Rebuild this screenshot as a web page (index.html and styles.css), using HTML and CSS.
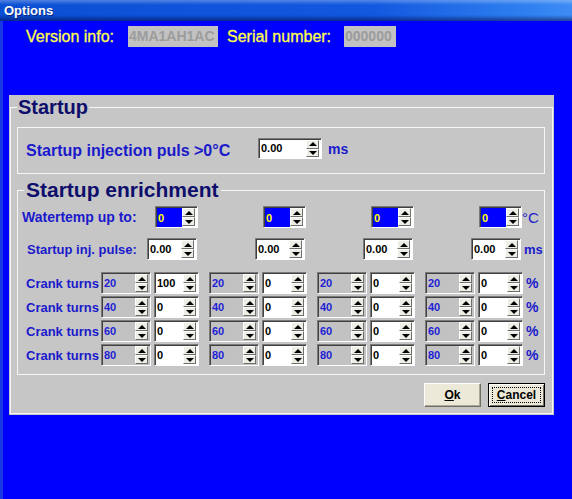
FILE: index.html
```html
<!DOCTYPE html>
<html>
<head>
<meta charset="utf-8">
<title>Options</title>
<link rel="stylesheet" href="styles.css">
</head>
<body>
<div class="titlebar"><span class="title">Options</span></div>
<div class="client">
  <div class="info">
    <span class="info-label version">Version info:</span>
    <span class="info-box version-box">4MA1AH1AC</span>
    <span class="info-label serial">Serial number:</span>
    <span class="info-box serial-box">000000</span>
  </div>
  <div class="panel">
    <fieldset class="group outer">
      <legend class="legend-startup">Startup</legend>
      <div class="inj-box">
        <span class="inj-label">Startup injection puls &gt;0°C</span>
        <div class="spin white w64"><span class="val">0.00</span><span class="btns"><i class="up"></i><i class="dn"></i></span></div>
        <span class="unit ms-top">ms</span>
      </div>
      <fieldset class="group enrich">
        <legend class="legend-enrich">Startup enrichment</legend>
        <div class="row water-row">
          <span class="row-label">Watertemp up to:</span>
          <div class="cell"><div class="spin blue water"><span class="val">0</span><span class="btns"><i class="up"></i><i class="dn"></i></span></div></div>
          <div class="cell"><div class="spin blue water"><span class="val">0</span><span class="btns"><i class="up"></i><i class="dn"></i></span></div></div>
          <div class="cell"><div class="spin blue water"><span class="val">0</span><span class="btns"><i class="up"></i><i class="dn"></i></span></div></div>
          <div class="cell"><div class="spin blue water"><span class="val">0</span><span class="btns"><i class="up"></i><i class="dn"></i></span></div></div>
          <span class="unit deg">°C</span>
        </div>
        <div class="row pulse-row">
          <span class="row-label">Startup inj. pulse:</span>
          <div class="cell"><div class="spin white pulse"><span class="val">0.00</span><span class="btns"><i class="up"></i><i class="dn"></i></span></div></div>
          <div class="cell"><div class="spin white pulse"><span class="val">0.00</span><span class="btns"><i class="up"></i><i class="dn"></i></span></div></div>
          <div class="cell"><div class="spin white pulse"><span class="val">0.00</span><span class="btns"><i class="up"></i><i class="dn"></i></span></div></div>
          <div class="cell"><div class="spin white pulse"><span class="val">0.00</span><span class="btns"><i class="up"></i><i class="dn"></i></span></div></div>
          <span class="unit ms">ms</span>
        </div>
        <div class="row crank-row first">
          <span class="row-label">Crank turns</span>
          <div class="cell"><div class="spin gray turns"><span class="val">20</span><span class="btns"><i class="up"></i><i class="dn"></i></span></div><div class="spin white pct-in"><span class="val">100</span><span class="btns"><i class="up"></i><i class="dn"></i></span></div></div>
          <div class="cell"><div class="spin gray turns"><span class="val">20</span><span class="btns"><i class="up"></i><i class="dn"></i></span></div><div class="spin white pct-in"><span class="val">0</span><span class="btns"><i class="up"></i><i class="dn"></i></span></div></div>
          <div class="cell"><div class="spin gray turns"><span class="val">20</span><span class="btns"><i class="up"></i><i class="dn"></i></span></div><div class="spin white pct-in"><span class="val">0</span><span class="btns"><i class="up"></i><i class="dn"></i></span></div></div>
          <div class="cell"><div class="spin gray turns"><span class="val">20</span><span class="btns"><i class="up"></i><i class="dn"></i></span></div><div class="spin white pct-in"><span class="val">0</span><span class="btns"><i class="up"></i><i class="dn"></i></span></div></div>
          <span class="unit pct">%</span>
        </div>
        <div class="row crank-row">
          <span class="row-label">Crank turns</span>
          <div class="cell"><div class="spin gray turns"><span class="val">40</span><span class="btns"><i class="up"></i><i class="dn"></i></span></div><div class="spin white pct-in"><span class="val">0</span><span class="btns"><i class="up"></i><i class="dn"></i></span></div></div>
          <div class="cell"><div class="spin gray turns"><span class="val">40</span><span class="btns"><i class="up"></i><i class="dn"></i></span></div><div class="spin white pct-in"><span class="val">0</span><span class="btns"><i class="up"></i><i class="dn"></i></span></div></div>
          <div class="cell"><div class="spin gray turns"><span class="val">40</span><span class="btns"><i class="up"></i><i class="dn"></i></span></div><div class="spin white pct-in"><span class="val">0</span><span class="btns"><i class="up"></i><i class="dn"></i></span></div></div>
          <div class="cell"><div class="spin gray turns"><span class="val">40</span><span class="btns"><i class="up"></i><i class="dn"></i></span></div><div class="spin white pct-in"><span class="val">0</span><span class="btns"><i class="up"></i><i class="dn"></i></span></div></div>
          <span class="unit pct">%</span>
        </div>
        <div class="row crank-row">
          <span class="row-label">Crank turns</span>
          <div class="cell"><div class="spin gray turns"><span class="val">60</span><span class="btns"><i class="up"></i><i class="dn"></i></span></div><div class="spin white pct-in"><span class="val">0</span><span class="btns"><i class="up"></i><i class="dn"></i></span></div></div>
          <div class="cell"><div class="spin gray turns"><span class="val">60</span><span class="btns"><i class="up"></i><i class="dn"></i></span></div><div class="spin white pct-in"><span class="val">0</span><span class="btns"><i class="up"></i><i class="dn"></i></span></div></div>
          <div class="cell"><div class="spin gray turns"><span class="val">60</span><span class="btns"><i class="up"></i><i class="dn"></i></span></div><div class="spin white pct-in"><span class="val">0</span><span class="btns"><i class="up"></i><i class="dn"></i></span></div></div>
          <div class="cell"><div class="spin gray turns"><span class="val">60</span><span class="btns"><i class="up"></i><i class="dn"></i></span></div><div class="spin white pct-in"><span class="val">0</span><span class="btns"><i class="up"></i><i class="dn"></i></span></div></div>
          <span class="unit pct">%</span>
        </div>
        <div class="row crank-row">
          <span class="row-label">Crank turns</span>
          <div class="cell"><div class="spin gray turns"><span class="val">80</span><span class="btns"><i class="up"></i><i class="dn"></i></span></div><div class="spin white pct-in"><span class="val">0</span><span class="btns"><i class="up"></i><i class="dn"></i></span></div></div>
          <div class="cell"><div class="spin gray turns"><span class="val">80</span><span class="btns"><i class="up"></i><i class="dn"></i></span></div><div class="spin white pct-in"><span class="val">0</span><span class="btns"><i class="up"></i><i class="dn"></i></span></div></div>
          <div class="cell"><div class="spin gray turns"><span class="val">80</span><span class="btns"><i class="up"></i><i class="dn"></i></span></div><div class="spin white pct-in"><span class="val">0</span><span class="btns"><i class="up"></i><i class="dn"></i></span></div></div>
          <div class="cell"><div class="spin gray turns"><span class="val">80</span><span class="btns"><i class="up"></i><i class="dn"></i></span></div><div class="spin white pct-in"><span class="val">0</span><span class="btns"><i class="up"></i><i class="dn"></i></span></div></div>
          <span class="unit pct">%</span>
        </div>
      </fieldset>
      <div class="buttons">
        <button class="btn ok"><span class="btn-text"><u>O</u>k</span></button>
        <button class="btn cancel"><span class="btn-text focus"><u>C</u>ancel</span></button>
      </div>
    </fieldset>
  </div>
</div>
</body>
</html>
```
FILE: styles.css
```css
html, body {
  margin: 0;
  padding: 0;
}
body {
  width: 572px;
  height: 499px;
  overflow: hidden;
  background: #0000ff;
  font-family: "Liberation Sans", Arial, sans-serif;
}
.titlebar {
  height: 21px;
  box-sizing: border-box;
  padding-left: 4px;
  display: flex;
  align-items: center;
  background:
    linear-gradient(to bottom, rgba(255,255,255,0.28) 0, rgba(255,255,255,0) 5px, rgba(0,0,0,0) 15px, rgba(0,0,60,0.35) 19px, rgba(0,0,60,0.5) 21px),
    linear-gradient(to right, #0b4fd4 0, #1258df 65%, #2f7ff0 92%, #3d8cf5 100%);
}
.title {
  color: #fff;
  font-weight: bold;
  font-size: 13px;
  text-shadow: 1px 1px 0 #0a2888;
}
.client {
  height: 478px;
  box-sizing: border-box;
  border-left: 3px solid #1838e6;
}
.info {
  display: flex;
  align-items: center;
  height: 26px;
  box-sizing: border-box;
  padding: 5px 0 0 23px;
}
.info-label {
  color: #ffff48;
  font-size: 16px;
  white-space: nowrap;
  -webkit-text-stroke: 0.3px #ffff48;
}
.version { width: 102px; }
.serial { width: 117px; margin-left: 9px; }
.info-box {
  height: 21px;
  line-height: 21px;
  box-sizing: border-box;
  padding-left: 1px;
  background: #c2c2c2;
  color: #9c9c9c;
  font-weight: bold;
  font-size: 14px;
}
.version-box { width: 90px; }
.serial-box { width: 52px; }

.panel {
  margin: 48px 0 0 6px;
  width: 545px;
  box-sizing: border-box;
  padding: 0 1px 1px 1px;
  background: #c6c6c6;
}
fieldset.group {
  margin: 0;
  min-width: 0;
  border: 1px solid #f6f6f6;
}
.outer {
  padding: 0 7px 6px 6px;
}
.legend-startup {
  padding: 0 1px;
  font-weight: bold;
  font-size: 20px;
  line-height: 24px;
  color: #0e0e6c;
}
.inj-box {
  margin-top: 8px;
  height: 47px;
  box-sizing: border-box;
  border: 1px solid #f6f6f6;
  display: flex;
  align-items: center;
  padding: 0 0 4px 8px;
}
.inj-label {
  flex: 0 0 232px;
  min-width: 0;
  margin-top: 4px;
  white-space: nowrap;
  color: #1a1acb;
  font-weight: bold;
  font-size: 16px;
}
fieldset.enrich {
  margin-top: 4px;
  padding: 4px 0 8px 0;
}
.legend-enrich {
  margin-left: 6px;
  padding: 0 2px;
  font-weight: bold;
  font-size: 21px;
  line-height: 24px;
  color: #0e0e6c;
}

.spin {
  display: flex;
  height: 22px;
  box-sizing: border-box;
  border: 1px solid;
  border-color: #7a7a7a #ffffff #ffffff #7a7a7a;
  box-shadow: inset 1px 1px 0 #404040;
  background: #fff;
}
.spin .val {
  flex: 1;
  min-width: 0;
  padding-left: 2px;
  font-weight: bold;
  font-size: 11px;
  line-height: 20px;
  color: #000;
}
.spin .btns {
  flex: 0 0 13px;
  margin: 1px 2px 1px 0;
  display: flex;
  flex-direction: column;
}
.btns i {
  flex: 1;
  display: flex;
  align-items: center;
  justify-content: center;
  background: #efeee6;
  border: 1px solid;
  border-color: #ffffff #6e6e6e #6e6e6e #ffffff;
}
.btns i::after {
  content: "";
  border-left: 4px solid transparent;
  border-right: 4px solid transparent;
}
.btns .up::after { border-bottom: 4px solid #000; }
.btns .dn::after { border-top: 4px solid #000; }

.spin.blue .val {
  background: #0000ff;
  color: #ffff00;
  margin: 1px 0 0 1px;
  padding-left: 1px;
}
.spin.gray {
  background: #c2c2c2;
}
.spin.gray .val {
  color: #1e1ed4;
}
.w64 { width: 64px; height: 21px; }
.w64 .val { line-height: 19px; }
.unit {
  color: #1a1acb;
  white-space: nowrap;
}
.ms-top {
  margin-left: 6px;
  font-weight: bold;
  font-size: 14px;
}

.row {
  display: flex;
  align-items: center;
  height: 22px;
}
.row-label {
  flex: 0 0 83px;
  width: 83px;
  min-width: 0;
  box-sizing: border-box;
  white-space: nowrap;
  overflow: visible;
  color: #1a1acb;
  font-weight: bold;
  font-size: 13px;
}
.water-row .row-label { padding-left: 4px; font-size: 14px; }
.pulse-row { margin-top: 10px; }
.pulse-row .row-label { padding-left: 9px; }
.crank-row { margin-top: 2px; }
.crank-row.first { margin-top: 12px; }
.crank-row .row-label { padding-left: 8px; }

.cell {
  flex: 0 0 98px;
  display: flex;
  justify-content: flex-end;
}
.cell + .cell { margin-left: 10px; }
.water { width: 43px; margin-right: 1px; }
.pulse { width: 50px; margin-right: 2px; }
.turns { width: 50px; }
.pct-in { width: 45px; margin-left: 3px; }

.deg { margin-left: -1px; font-size: 15px; }
.ms { margin-left: 1px; font-weight: bold; font-size: 13px; }
.pct { margin-left: 3px; font-weight: bold; font-size: 14px; }

.buttons {
  display: flex;
  justify-content: flex-end;
  gap: 7px;
  margin-top: 8px;
}
.btn {
  width: 57px;
  height: 24px;
  box-sizing: border-box;
  padding: 0;
  margin: 0;
  font-family: "Liberation Sans", Arial, sans-serif;
  font-weight: bold;
  font-size: 12px;
  color: #000;
  background: #ece9d8;
  border: 1px solid;
  border-color: #ffffff #716f64 #716f64 #ffffff;
  box-shadow: inset -1px -1px 0 #aca899;
}
.btn-text {
  display: block;
  line-height: 20px;
}
.cancel {
  border: 1px solid #000;
  box-shadow: inset 1px 1px 0 #fff, inset -1px -1px 0 #716f64;
  padding: 3px;
}
.focus {
  line-height: 14px;
  border: 1px dotted #000;
}
```
